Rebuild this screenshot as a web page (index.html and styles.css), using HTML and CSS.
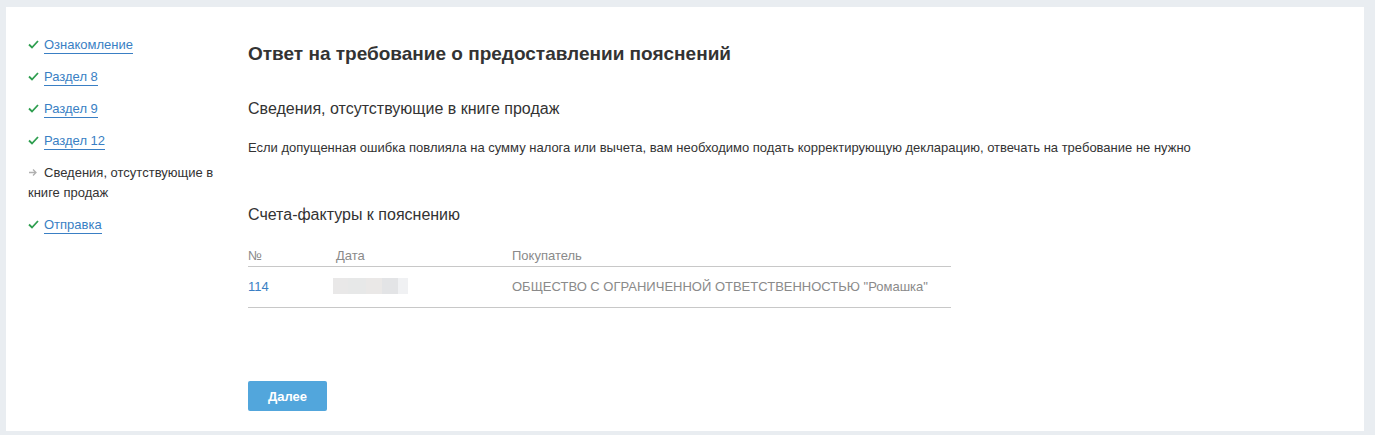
FILE: index.html
```html
<!DOCTYPE html>
<html lang="ru">
<head>
<meta charset="utf-8">
<link rel="stylesheet" href="styles.css">
</head>
<body>
<div class="panel">
  <nav class="steps">
    <div class="step done"><span class="icon"><svg width="11" height="9" viewBox="0 0 11 9"><path d="M1 4.5 L4 7.5 L10 1" fill="none" stroke="#2e9e4f" stroke-width="1.8"/></svg></span><a href="#">Ознакомление</a></div>
    <div class="step done"><span class="icon"><svg width="11" height="9" viewBox="0 0 11 9"><path d="M1 4.5 L4 7.5 L10 1" fill="none" stroke="#2e9e4f" stroke-width="1.8"/></svg></span><a href="#">Раздел 8</a></div>
    <div class="step done"><span class="icon"><svg width="11" height="9" viewBox="0 0 11 9"><path d="M1 4.5 L4 7.5 L10 1" fill="none" stroke="#2e9e4f" stroke-width="1.8"/></svg></span><a href="#">Раздел 9</a></div>
    <div class="step done"><span class="icon"><svg width="11" height="9" viewBox="0 0 11 9"><path d="M1 4.5 L4 7.5 L10 1" fill="none" stroke="#2e9e4f" stroke-width="1.8"/></svg></span><a href="#">Раздел 12</a></div>
    <div class="step current"><span class="icon"><svg width="10" height="9" viewBox="0 0 10 9"><path d="M1 4.5 H8 M5 1.5 L8 4.5 L5 7.5" fill="none" stroke="#b0b0b0" stroke-width="1.3"/></svg></span>Сведения, отсутствующие в книге продаж</div>
    <div class="step done"><span class="icon"><svg width="11" height="9" viewBox="0 0 11 9"><path d="M1 4.5 L4 7.5 L10 1" fill="none" stroke="#2e9e4f" stroke-width="1.8"/></svg></span><a href="#">Отправка</a></div>
  </nav>
  <main class="content">
    <h1 class="title">Ответ на требование о предоставлении пояснений</h1>
    <h2 class="subtitle">Сведения, отсутствующие в книге продаж</h2>
    <p class="note">Если допущенная ошибка повлияла на сумму налога или вычета, вам необходимо подать корректирующую декларацию, отвечать на требование не нужно</p>
    <h2 class="subtitle invoices">Счета-фактуры к пояснению</h2>
    <table class="table">
      <thead>
        <tr><th class="c-num">№</th><th class="c-date">Дата</th><th>Покупатель</th></tr>
      </thead>
      <tbody>
        <tr>
          <td class="c-num num">114</td>
          <td class="c-date"><span class="blur"><i class="b1"></i><i class="b2"></i><i class="b3"></i><i class="b4"></i><i class="b5"></i></span></td>
          <td>ОБЩЕСТВО С ОГРАНИЧЕННОЙ ОТВЕТСТВЕННОСТЬЮ "Ромашка"</td>
        </tr>
      </tbody>
    </table>
    <button class="btn" type="button">Далее</button>
  </main>
</div>
</body>
</html>
```

FILE: styles.css
```css
html, body {
  margin: 0;
  padding: 0;
}
body {
  background: #e9edf1;
  font-family: "Liberation Sans", Arial, sans-serif;
  color: #333;
  padding: 7px 11px 4px 6px;
  height: 435px;
  box-sizing: border-box;
}
.panel {
  background: #fff;
  height: 424px;
  display: flex;
  box-sizing: border-box;
  padding: 28px 0 0 22px;
}
.steps {
  width: 200px;
  flex: none;
  display: flex;
  flex-direction: column;
  gap: 12px;
  font-size: 13px;
  line-height: 20px;
}
.step {
  color: #333;
}
.step .icon {
  display: inline-block;
  width: 16px;
}
.step .icon svg {
  vertical-align: 0px;
}
.step a {
  color: #3a7fc4;
  text-decoration: none;
  border-bottom: 1px solid #3a7fc4;
  padding-bottom: 1px;
}
.step.current {
  color: #333;
}
.content {
  margin-left: 20px;
  width: 703px;
  display: flex;
  flex-direction: column;
  align-items: flex-start;
}
.title {
  margin: 7px 0 0;
  font-size: 19px;
  font-weight: bold;
  line-height: 24px;
  color: #333;
}
.subtitle {
  margin: 32px 0 0;
  font-size: 16px;
  font-weight: normal;
  line-height: 22px;
  color: #333;
}
.note {
  margin: 20px 0 0;
  font-size: 13px;
  line-height: 16px;
  white-space: nowrap;
  color: #333;
}
.invoices {
  margin-top: 48px;
}
.table {
  margin-top: 21px;
  width: 703px;
  border-collapse: collapse;
  font-size: 13px;
  color: #8a8a8a;
}
.table th {
  text-align: left;
  font-weight: normal;
  padding: 2px 0 3px;
  line-height: 14px;
  border-bottom: 1px solid #c8c8c8;
}
.table td {
  padding: 11px 0 13px;
  line-height: 15px;
  border-bottom: 1px solid #c8c8c8;
  vertical-align: middle;
}
.c-num { width: 88px; }
.c-date { width: 176px; }
.num { color: #3a7fc4; }
.blur {
  display: flex;
  width: 75px;
  height: 16px;
  margin-left: -3px;
}
.blur i { display: block; height: 100%; }
.b1 { width: 15px; background: #e9e8e8; }
.b2 { width: 18px; background: #e7e8e8; }
.b3 { width: 16px; background: #eae8e7; }
.b4 { width: 16px; background: #e3e4e6; }
.b5 { width: 10px; background: #f0f1f3; }
.btn {
  margin-top: 73px;
  width: 79px;
  height: 30px;
  border: none;
  border-radius: 2px;
  background: #52a6dc;
  color: #fff;
  font-family: "Liberation Sans", Arial, sans-serif;
  font-size: 13px;
  font-weight: bold;
  padding: 0;
}
```
